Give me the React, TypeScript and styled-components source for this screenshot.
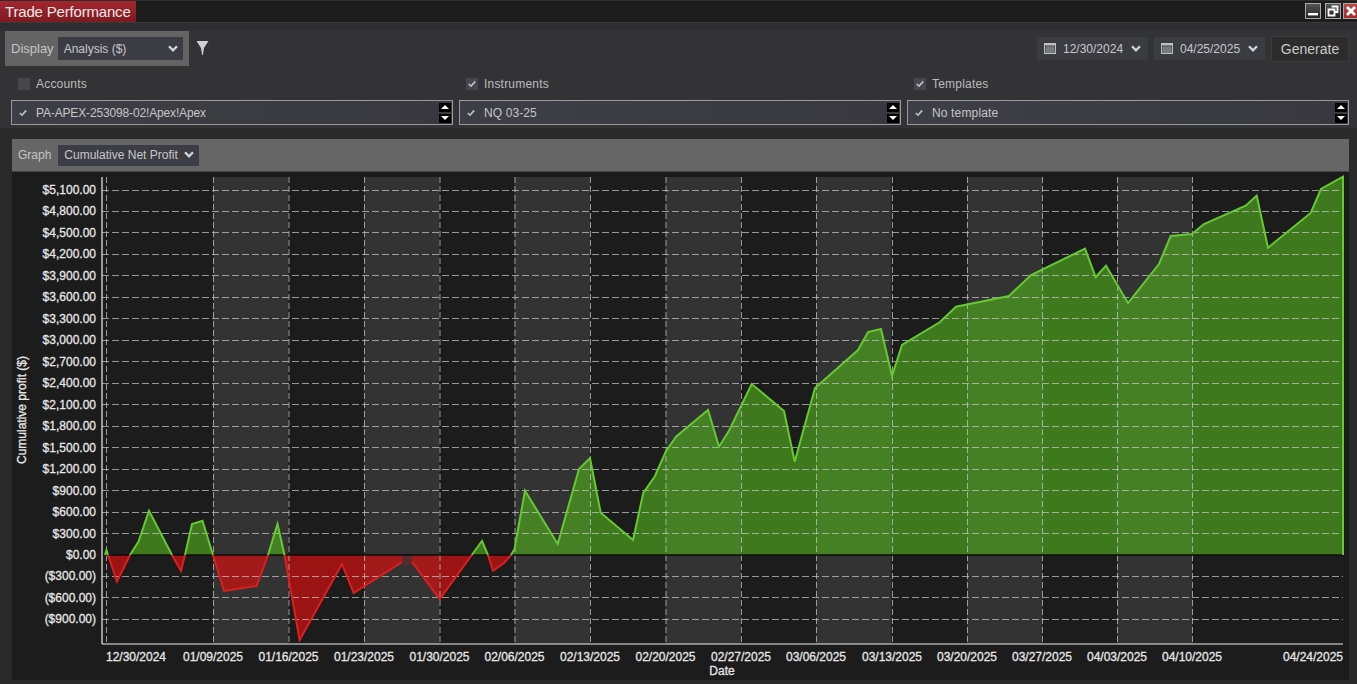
import React from "react";
import styled, { createGlobalStyle } from "styled-components";

const Global = createGlobalStyle`
  html, body { margin: 0; padding: 0; background: #333; }
  body { font-family: "Liberation Sans", Arial, sans-serif; overflow: hidden; }
`;

const Window = styled.div`
  width: 1357px; height: 684px; display: flex; flex-direction: column;
  background: #333336; overflow: hidden;
`;
const TitleBar = styled.div`
  height: 23px; flex: none; display: flex; align-items: stretch; justify-content: space-between;
  background: #1c1c1c; border-top: 1px solid #2c2c2c; box-sizing: border-box;
  border-bottom: 1px solid #3a3a3a;
`;
const TitleTab = styled.div`
  width: 136px; box-sizing: border-box; padding-left: 5px; line-height: 21px; font-size: 15px; white-space: nowrap;
  letter-spacing: -0.18px; color: #f0e8e8; background: linear-gradient(#a5262f, #7d1a20);
`;
const WinButtons = styled.div`
  display: flex; align-items: center; gap: 4px; padding-bottom: 1px;
`;
const WinButton = styled.div<{ $close?: boolean }>`
  width: 16px; height: 16px; box-sizing: border-box; display: flex; align-items: center; justify-content: center; flex: none;
  border: 1px solid #aaa;
  background: ${p => (p.$close ? "linear-gradient(#b84a4a, #a02a2a)" : "linear-gradient(#555, #222)")};
  margin-right: ${p => (p.$close ? "-2px" : "0")};
  margin-left: ${p => (p.$close ? "-2px" : "0")};
`;
const TopPanel = styled.div`
  flex: none; height: 105px; box-sizing: border-box; padding: 1px 8px 0 5px;
  border-top: 7px solid #2e2e30; background: #333336;
`;
const Toolbar = styled.div`
  display: flex; align-items: flex-start; height: 35px;
`;
const DisplayPanel = styled.div`
  width: 184px; height: 35px; box-sizing: border-box; background: #646464; display: flex; align-items: center;
  padding: 0 6px; gap: 4px; font-size: 13px; color: #c4c4c4;
`;
const Dropdown = styled.div<{ $w: number; $h: number }>`
  width: ${p => p.$w}px; height: ${p => p.$h}px; box-sizing: border-box; flex: none;
  background: #3c3c44; display: flex; align-items: center; justify-content: space-between;
  padding: 0 4px 0 6px; font-size: 12px; color: #c8c8c8;
`;
const FilterButton = styled.div`
  margin: 9px 0 0 7px; width: 13px; height: 16px;
`;
const Spacer = styled.div` flex: 1; `;
const DatePicker = styled.div`
  width: 111px; height: 23px; margin: 6px 6px 0 0; box-sizing: border-box; background: #3b3b42; display: flex;
  align-items: center; padding: 0 6px 0 7px; gap: 7px; font-size: 12px; color: #c8c8c8;
`;
const GenerateButton = styled.div`
  width: 78px; height: 26px; margin-top: 5px; box-sizing: border-box; background: #2c2c2c; border: 1px solid #3a3a3a;
  display: flex; align-items: center; justify-content: center; font-size: 14px; color: #c8c8c8;
`;
const FilterGrid = styled.div`
  display: grid; grid-template-columns: repeat(3, 442px); column-gap: 6px; margin: 5px 0 0 6px;
`;
const FilterColumn = styled.div` display: flex; flex-direction: column; `;
const CheckRow = styled.div`
  height: 26px; display: flex; align-items: center; gap: 6px; padding-left: 7px; font-size: 12px; color: #bdbdbd;
  letter-spacing: 0.2px; box-sizing: border-box; margin-bottom: 3px;
`;
const CheckBox = styled.div`
  width: 12px; height: 12px; background: #46464c; display: flex; align-items: center; justify-content: center;
`;
const ListBox = styled.div`
  height: 25px; box-sizing: border-box; border: 1px solid #9a9a9a; background: linear-gradient(90deg, #3e3e46, #38383e);
  display: flex; align-items: center; padding: 0 1px 0 7px; gap: 9px; font-size: 12px; color: #c6c6c6;
`;
const ListText = styled.div<{ $spacing: number }>`
  flex: 1; padding-top: 1px; letter-spacing: ${p => p.$spacing}px;
`;
const Spinner = styled.div` display: flex; flex-direction: column; gap: 2px; `;
const SpinButton = styled.div`
  width: 12px; height: 9px; background: #000; display: flex; align-items: center; justify-content: center;
`;
const Lower = styled.div`
  flex: 1; min-height: 0; display: flex; flex-direction: column; background: #2a2a2a; box-sizing: border-box;
  padding: 11px 8px 4px 12px;
`;
const GraphBar = styled.div`
  height: 33px; flex: none; box-sizing: border-box; background: #666; display: flex; align-items: center; padding: 0 6px;
  gap: 7px; font-size: 12px; color: #c4c4c4; border-bottom: 1px solid #444;
`;
const ChartBox = styled.div`
  flex: 1; min-height: 0; background: #1c1c1c;
  & svg { display: block; }
`;

const Chevron = () => (
  <svg width="12" height="10" viewBox="0 0 12 10"><path d="M2 2.2 L6 6.4 L10 2.2" fill="none" stroke="#d4d4d4" strokeWidth="2.3" /></svg>
);
const Tick = () => (
  <svg width="8" height="8" viewBox="0 0 8 8"><path d="M0.8 4 L3 6.2 L7.2 1.4" fill="none" stroke="#c4c4c4" strokeWidth="1.6" /></svg>
);
const Calendar = () => (
  <svg width="12" height="11" viewBox="0 0 12 11" style={{ flex: "none" }}>
    <rect x="0.5" y="0.5" width="11" height="10" fill="none" stroke="#c0c0c0" />
    <rect x="0.5" y="0.5" width="11" height="2" fill="#c0c0c0" />
    <path d="M0.5 5 H11.5 M0.5 7 H11.5 M0.5 9 H11.5 M3 3 V10 M5 3 V10 M7 3 V10 M9 3 V10" stroke="#a0a0a0" strokeWidth="0.8" />
  </svg>
);
const Up = () => <svg width="8" height="4" viewBox="0 0 8 4"><path d="M0 4 L4 0 L8 4 Z" fill="#fff" /></svg>;
const Down = () => <svg width="8" height="4" viewBox="0 0 8 4"><path d="M0 0 L4 4 L8 0 Z" fill="#fff" /></svg>;

const filters = [
  { label: "Accounts", checked: false, value: "PA-APEX-253098-02!Apex!Apex", spacing: -0.15 },
  { label: "Instruments", checked: true, value: "NQ 03-25", spacing: 0.1 },
  { label: "Templates", checked: true, value: "No template", spacing: 0.15 },
];

const gridX = [106, 213, 288.5, 364, 439.5, 514.5, 590, 665.5, 741, 816, 892, 967, 1042, 1117, 1192];
const bands = [213, 364, 514.5, 665.5, 816, 967, 1117];
const yLabels = [
  "$5,100.00", "$4,800.00", "$4,500.00", "$4,200.00", "$3,900.00", "$3,600.00", "$3,300.00", "$3,000.00", "$2,700.00",
  "$2,400.00", "$2,100.00", "$1,800.00", "$1,500.00", "$1,200.00", "$900.00", "$600.00", "$300.00", "$0.00",
  "($300.00)", "($600.00)", "($900.00)",
];
const Y0 = 555;
const yStep = (555 - 190) / 17;
const lineY = (i: number) => Math.round(189.5 + i * yStep) + 0.5;
const xLabels: [string, number][] = [
  ["12/30/2024", 136], ["01/09/2025", 213], ["01/16/2025", 288.5], ["01/23/2025", 364], ["01/30/2025", 439.5],
  ["02/06/2025", 514.5], ["02/13/2025", 590], ["02/20/2025", 665.5], ["02/27/2025", 741], ["03/06/2025", 816],
  ["03/13/2025", 892], ["03/20/2025", 967], ["03/27/2025", 1042], ["04/03/2025", 1117], ["04/10/2025", 1192], ["04/24/2025", 1313],
];

const greens = [
  "105,555 106.5,550 108,555",
  "130,555 138.4,541.7 149,510.7 172,555",
  "185,555 192,524 202.5,520.7 213,555",
  "268,555 277.5,524 284.5,555",
  "471.8,555 482,541 488,555",
  "511,555 514.5,549 525,490.7 557.7,544 579,469 590,458 600.7,512.7 633,540 643.3,493 655,476 665.7,451.7 676,436.7 708,410 719,446.7 729,430.7 751.7,384 784,411 794.7,461.7 815,388 858,350 868,332 881,329 892,376 902,345 940,322 956,306.7 1009,296 1031,275 1085,248.7 1095.7,277 1106,265.7 1128,303 1159,264 1170.7,236 1192,234 1204,224 1245.7,205.7 1256.7,195.7 1268,247.7 1310.7,213 1321,189 1343,176.7 1343,555",
];
const reds = [
  "108,555 117,581.7 130,555",
  "172,555 181,571 185,555",
  "213,555 224,591 256.5,586 268,555",
  "284.5,555 299.6,640 342,564 353.6,593 402,562",
  "412,562 439.7,599 471.8,555",
  "488,555 493,570.7 504,563 511,555",
];

const AxisText = styled.text`
  font-family: "Liberation Sans", Arial, sans-serif; font-size: 12px; fill: #e6e6e6; stroke: #e6e6e6; stroke-width: 0.3px;
`;

function Chart() {
  return (
    <svg width="1337" height="508" viewBox="12 172 1337 508">
      {bands.map(x => <rect key={x} x={x} y={177} width={75.5} height={467} fill="#333333" />)}
      {greens.map((p, i) => <polygon key={i} points={p} fill="rgba(78,165,31,.68)" />)}
      {reds.map((p, i) => <polygon key={i} points={p + (i === 3 ? " 402,555" : i === 4 ? " 412,555" : "")} fill="rgba(216,15,15,.68)" />)}
      <polygon points="402,555 412,555 412,562 407,566 402,562" fill="#5c2a2c" />
      {gridX.map(x => <line key={x} x1={x + 0.5} x2={x + 0.5} y1={177} y2={644} stroke="rgba(200,200,200,.72)" strokeWidth="1" strokeDasharray="6 3" />)}
      {yLabels.map((_, i) =>
        i === 17 ? null : <line key={i} x1={102} x2={1343} y1={lineY(i)} y2={lineY(i)} stroke="rgba(200,200,200,.72)" strokeWidth="1" strokeDasharray="7 3" />
      )}
      <line x1={102} x2={1343} y1={Y0} y2={Y0} stroke="#0c0c0c" strokeWidth="1.6" />
      {greens.map((p, i) => <polyline key={i} points={p} fill="none" stroke="#66c832" strokeWidth="2" />)}
      {reds.map((p, i) => <polyline key={i} points={p} fill="none" stroke="#dd1f1f" strokeWidth="2" />)}
      <line x1={102} x2={102} y1={177} y2={644} stroke="#eee" strokeWidth="1.2" />
      <line x1={102} x2={1343} y1={644} y2={644} stroke="#eee" strokeWidth="1.2" />
      {yLabels.map((t, i) => (
        <AxisText key={t} x={96} y={190 + i * yStep + 4} textAnchor="end">{t}</AxisText>
      ))}
      {xLabels.map(([t, x]) => (
        <AxisText key={t} x={x} y={661} textAnchor="middle">{t}</AxisText>
      ))}
      <AxisText x={722} y={675} textAnchor="middle">Date</AxisText>
      <AxisText transform="translate(26 410) rotate(-90)" textAnchor="middle">Cumulative profit ($)</AxisText>
    </svg>
  );
}

export default function App() {
  return (
    <Window>
      <Global />
      <TitleBar>
        <TitleTab>Trade Performance</TitleTab>
        <WinButtons>
          <WinButton>
            <svg width="12" height="12" viewBox="0 0 12 12"><rect x="1" y="8" width="10" height="2.4" fill="#fff" /></svg>
          </WinButton>
          <WinButton>
            <svg width="12" height="12" viewBox="0 0 12 12"><path d="M4.5 1.5 H10.5 V7 H8 M1.5 4.5 H7.5 V10.5 H1.5 Z" fill="none" stroke="#fff" strokeWidth="1.8" /></svg>
          </WinButton>
          <WinButton $close>
            <svg width="12" height="12" viewBox="0 0 12 12"><path d="M2 2 L10 10 M10 2 L2 10" stroke="#fff" strokeWidth="2.8" /></svg>
          </WinButton>
        </WinButtons>
      </TitleBar>
      <TopPanel>
        <Toolbar>
          <DisplayPanel>
            Display
            <Dropdown $w={125} $h={23}>Analysis ($)<Chevron /></Dropdown>
          </DisplayPanel>
          <FilterButton>
            <svg width="13" height="16" viewBox="0 0 13 16"><path d="M0.5 1 H12.5 L8 8 L6.9 15 H6.1 L5 8 Z" fill="#d0d0d0" /></svg>
          </FilterButton>
          <Spacer />
          <DatePicker><Calendar />12/30/2024<Chevron /></DatePicker>
          <DatePicker><Calendar />04/25/2025<Chevron /></DatePicker>
          <GenerateButton>Generate</GenerateButton>
        </Toolbar>
        <FilterGrid>
          {filters.map(f => (
            <FilterColumn key={f.label}>
              <CheckRow>
                <CheckBox>{f.checked && <Tick />}</CheckBox>
                {f.label}
              </CheckRow>
              <ListBox>
                <Tick />
                <ListText $spacing={f.spacing}>{f.value}</ListText>
                <Spinner>
                  <SpinButton><Up /></SpinButton>
                  <SpinButton><Down /></SpinButton>
                </Spinner>
              </ListBox>
            </FilterColumn>
          ))}
        </FilterGrid>
      </TopPanel>
      <Lower>
        <GraphBar>
          Graph
          <Dropdown $w={141} $h={21}>Cumulative Net Profit<Chevron /></Dropdown>
        </GraphBar>
        <ChartBox><Chart /></ChartBox>
      </Lower>
    </Window>
  );
}
